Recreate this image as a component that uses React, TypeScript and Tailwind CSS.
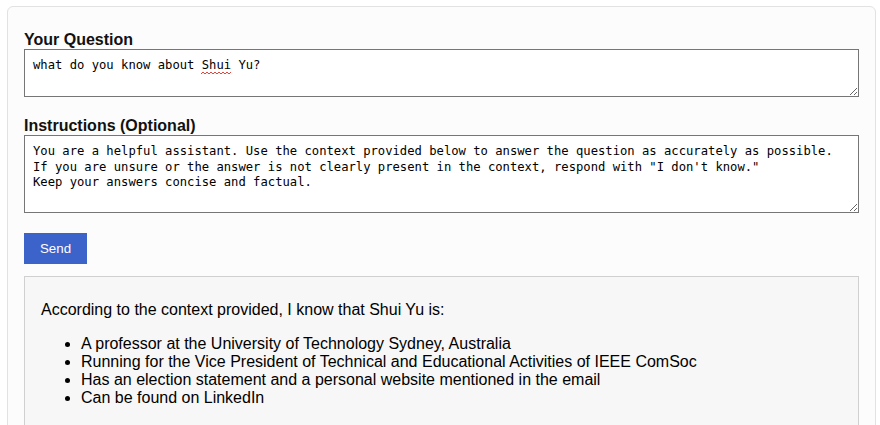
import React from "react";

export default function App() {
  const mono = { fontFamily: '"DejaVu Sans Mono", "Liberation Mono", monospace' };
  return (
    <div className="min-h-screen bg-white pt-[6px] pl-[7px]" style={{ fontFamily: '"Liberation Sans", Arial, sans-serif' }}>
      <div className="w-[869px] rounded-md border border-[#e2e2e2] bg-[#fcfcfc] px-4 pt-[24px] pb-8">
        <label className="block text-[16px] leading-[18px] font-bold text-[#111]">Your Question</label>
        <div className="relative">
          <textarea
            className="block h-[48px] w-full border border-[#767676] bg-white px-[8px] py-[8px] text-[12.2px] leading-[15.5px] text-black outline-none"
            style={mono}
            defaultValue="what do you know about Shui Yu?"
            spellCheck={false}
          />
          <svg className="absolute left-[177px] top-[22px]" width="30" height="4" viewBox="0 0 30 4">
            <path d="M0 3 L2 1 L4 3 L6 1 L8 3 L10 1 L12 3 L14 1 L16 3 L18 1 L20 3 L22 1 L24 3 L26 1 L28 3 L30 1" fill="none" stroke="#e5463a" strokeWidth="1" />
          </svg>
        </div>
        <label className="mt-[20px] block text-[16px] leading-[18px] font-bold text-[#111]">Instructions (Optional)</label>
        <textarea
          className="block h-[78px] w-full border border-[#767676] bg-white px-[8px] py-[8px] text-[12.2px] leading-[15.5px] text-black outline-none"
          style={mono}
          spellCheck={false}
          defaultValue={`You are a helpful assistant. Use the context provided below to answer the question as accurately as possible.\nIf you are unsure or the answer is not clearly present in the context, respond with "I don't know."\nKeep your answers concise and factual.`}
        />
        <button className="mt-[20px] block h-[31px] w-[63px] bg-[#3b63c9] text-[13.33px] text-white">Send</button>
        <div className="mt-[12px] border border-[#d0d0d0] bg-[#f7f7f7] px-4 pt-[24px] pb-6 text-[16px] leading-[18px] text-black">
          <p className="mb-4">According to the context provided, I know that Shui Yu is:</p>
          <ul className="list-disc pl-10">
            <li>A professor at the University of Technology Sydney, Australia</li>
            <li>Running for the Vice President of Technical and Educational Activities of IEEE ComSoc</li>
            <li>Has an election statement and a personal website mentioned in the email</li>
            <li>Can be found on LinkedIn</li>
          </ul>
        </div>
      </div>
    </div>
  );
}
